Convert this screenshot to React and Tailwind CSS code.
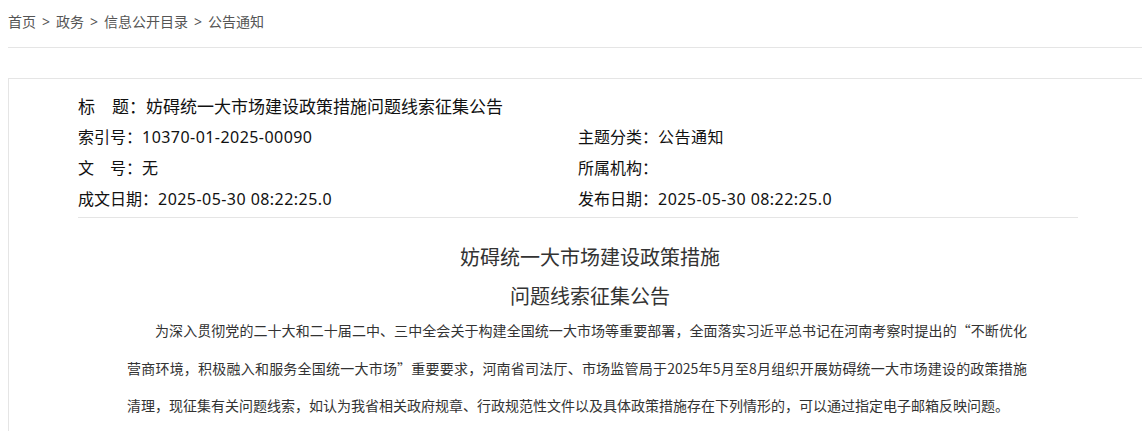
import React from 'react';

const crumbs = ['首页', '政务', '信息公开目录', '公告通知'];

const meta = [
  ['索引号', '10370-01-2025-00090', ['主题分类', '公告通知']],
  ['文　号', '无', ['所属机构', '']],
  ['成文日期', '2025-05-30 08:22:25.0', ['发布日期', '2025-05-30 08:22:25.0']],
];

const cjk = { fontFamily: '"Noto Sans CJK SC", sans-serif' };

export default function App() {
  return (
    <div
      className="w-full min-h-screen overflow-hidden bg-white"
      style={{ fontFamily: '"Noto Sans", "Noto Sans CJK SC", sans-serif' }}
    >
      {/* breadcrumb */}
      <div className="ml-2 w-[1200px] border-b border-[#e5e5e5] pt-3 pb-[15px]">
        <div className="flex items-center text-[14px] leading-[20px] text-[#555]">
          {crumbs.map((c, i) => (
            <React.Fragment key={c}>
              {i > 0 && <span className="px-[6px]">&gt;</span>}
              <span>{c}</span>
            </React.Fragment>
          ))}
        </div>
      </div>

      {/* article box */}
      <div className="ml-2 mt-[30px] w-[1164px] border border-[#e5e5e5] pb-10">
        <div className="ml-[69px] w-[1000px] border-b border-[#e5e5e5] pt-3 pb-[2px] text-[16px] text-[#111]">
          <div className="h-[31px] text-[17px] leading-[31px]">标　题：妨碍统一大市场建设政策措施问题线索征集公告</div>
          {meta.map(([label, value, right]) => (
            <div key={label} className="grid h-[31px] grid-cols-2 items-center leading-[31px]">
              <div>
                {label}：<span className="tracking-[0.45px]">{value}</span>
              </div>
              <div>
                {right[0]}：<span className="tracking-[0.45px]">{right[1]}</span>
              </div>
            </div>
          ))}
        </div>

        <div className="mt-[21px] text-center text-[20px] text-[#333]" style={cjk}>
          <h1 className="leading-[36px]">妨碍统一大市场建设政策措施</h1>
          <h2 className="mt-[5px] leading-[32px]">问题线索征集公告</h2>
        </div>

        <div className="ml-[118px] w-[900px] text-justify text-[14px] leading-[37.5px] text-[#333]" style={cjk}>
          <p className="indent-[2em]">
            为深入贯彻党的二十大和二十届二中、三中全会关于构建全国统一大市场等重要部署，全面落实习近平总书记在河南考察时提出的“不断优化营商环境，积极融入和服务全国统一大市场”重要要求，河南省司法厅、市场监管局于2025年5月至8月组织开展妨碍统一大市场建设的政策措施清理，现征集有关问题线索，如认为我省相关政府规章、行政规范性文件以及具体政策措施存在下列情形的，可以通过指定电子邮箱反映问题。
          </p>
        </div>
      </div>
    </div>
  );
}
